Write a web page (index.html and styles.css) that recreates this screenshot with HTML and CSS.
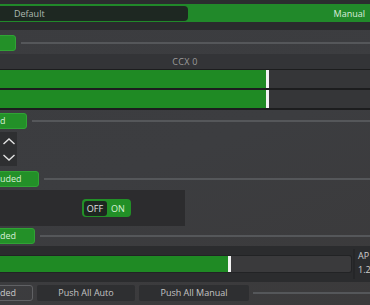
FILE: index.html
```html
<!DOCTYPE html>
<html>
<head>
<meta charset="utf-8">
<link rel="stylesheet" href="styles.css">
</head>
<body>
<div class="page">
  <div class="strip-top"></div>
  <div class="seg">
    <div class="seg-off">Default</div>
    <div class="seg-on">Manual</div>
  </div>
  <div class="strip-gap"></div>

  <div class="row row-a">
    <div class="gbtn w-empty"></div>
    <div class="rule"></div>
  </div>

  <div class="hdr">CCX 0</div>
  <div class="bars">
    <div class="bar"><div class="fill" style="width:266px"></div><div class="handle"></div></div>
    <div class="bar"><div class="fill" style="width:266px"></div><div class="handle"></div></div>
  </div>

  <div class="row row-b">
    <div class="gbtn w-d">d</div>
    <div class="rule"></div>
  </div>

  <div class="arrows">
    <svg width="17" height="34" viewBox="0 0 17 34">
      <polyline points="3.5,12 9,7 14.5,12" fill="none" stroke="#e2e2e2" stroke-width="1.4"/>
      <polyline points="3.5,23 9,28 14.5,23" fill="none" stroke="#e2e2e2" stroke-width="1.4"/>
    </svg>
  </div>

  <div class="row row-c">
    <div class="gbtn w-uded">uded</div>
    <div class="rule"></div>
  </div>

  <div class="panel">
    <div class="toggle">
      <span class="t-off">OFF</span>
      <span class="t-on">ON</span>
    </div>
  </div>

  <div class="row row-d">
    <div class="gbtn w-ded">ded</div>
    <div class="rule"></div>
  </div>

  <div class="barpanel">
    <div class="track"><div class="fill" style="width:228px"></div><div class="handle"></div></div>
    <div class="side">
      <span>AP</span>
      <span>1.2</span>
    </div>
  </div>

  <div class="row row-e">
    <div class="obtn">ded</div>
    <div class="dbtn auto">Push All Auto</div>
    <div class="dbtn manual">Push All Manual</div>
    <div class="rule"></div>
  </div>
</div>
</body>
</html>
```

FILE: styles.css
```css
* { box-sizing: border-box; }

html, body {
  margin: 0;
  padding: 0;
  background: #3a3b3e;
}

.page {
  width: 370px;
  height: 305px;
  overflow: hidden;
  display: flex;
  flex-direction: column;
  font-family: "Open Sans", "Noto Sans", sans-serif;
  font-size: 9px;
  color: #c8c8c8;
  background: linear-gradient(160deg, #3b3c3f 0%, #3c3d40 50%, #3b3a3b 100%);
}

.strip-top {
  height: 4px;
  flex: none;
  background: #2b2d2f;
}

.seg {
  height: 18px;
  flex: none;
  display: flex;
  padding: 1.5px 0;
  background: #21892a;
}

.seg-off {
  width: 188px;
  flex: none;
  padding-left: 14px;
  line-height: 15px;
  background: #1e2822;
  border-radius: 0 4px 4px 0;
  color: #aebbb2;
}

.seg-on {
  flex: 1;
  text-align: right;
  padding-right: 5px;
  line-height: 15px;
  color: #dcecdc;
}

.strip-gap {
  height: 8px;
  flex: none;
  background: #2a2b2d;
}

.row {
  display: flex;
  align-items: center;
  gap: 5px;
  flex: none;
}

.row-a { height: 24px; padding-top: 1px; }
.row-b { height: 22px; }
.row-c { height: 24px; padding-top: 1px; }
.row-d { height: 20px; }
.row-e { height: 23px; gap: 4px; padding-bottom: 2px; }

.gbtn {
  height: 16px;
  flex: none;
  margin-left: -4px;
  padding-left: 3px;
  line-height: 14px;
  background: #239028;
  border: 1px solid #30a335;
  border-radius: 3px;
  color: #d6eed6;
}

.w-empty { width: 20px; }
.w-d { width: 31px; }
.w-uded { width: 43px; }
.w-ded { width: 39px; }

.rule {
  flex: 1;
  height: 2px;
  background: #55575a;
}

.hdr {
  height: 15px;
  flex: none;
  text-align: center;
  line-height: 16px;
  background: #333437;
  color: #9c9c9c;
  letter-spacing: 0.3px;
}

.bars {
  flex: none;
  display: flex;
  flex-direction: column;
  gap: 2px;
  padding: 1px 0 2px;
  background: #1c1d1e;
}

.bar {
  height: 18px;
  display: flex;
  background: #353638;
}

.fill {
  background: #1f8a24;
}

.handle {
  width: 3px;
  background: #f2f2f2;
}

.arrows {
  width: 17px;
  height: 34px;
  flex: none;
  background: #2e2f31;
}

.arrows svg { display: block; }

.panel {
  width: 185px;
  height: 36px;
  flex: none;
  display: flex;
  align-items: center;
  padding-left: 82px;
  background: #2c2c2e;
}

.toggle {
  display: flex;
  align-items: stretch;
  height: 18px;
  width: 49px;
  padding: 1.5px;
  background: #229027;
  border-radius: 4px;
}

.t-off {
  width: 23px;
  text-align: center;
  line-height: 15px;
  background: #1d2720;
  border-radius: 3px;
  color: #e0e0e0;
}

.t-on {
  flex: 1;
  text-align: center;
  line-height: 15px;
  color: #d9f0d9;
}

.barpanel {
  height: 36px;
  flex: none;
  display: flex;
  align-items: flex-start;
  padding-top: 9px;
  background: #2b2c2e;
}

.track {
  width: 352px;
  height: 18px;
  flex: none;
  display: flex;
  background: #3a3a3c;
  border: 1px solid #222325;
  border-left: none;
  border-radius: 0 3px 3px 0;
}

.side {
  flex: 1;
  display: flex;
  flex-direction: column;
  margin-left: 1px;
  margin-top: -6px;
  padding-left: 3px;
  border-left: 2px solid #252628;
  height: 30px;
  line-height: 14px;
  color: #cfcfcf;
  white-space: nowrap;
}

.obtn {
  width: 37px;
  height: 16px;
  flex: none;
  margin-left: -4px;
  padding-left: 3px;
  line-height: 14px;
  border: 1px solid #606164;
  border-radius: 3px;
  color: #c8c8c8;
}

.dbtn {
  height: 16px;
  flex: none;
  text-align: center;
  line-height: 16px;
  background: #2e2f31;
  border-radius: 2px;
  color: #c4c4c4;
}

.auto { width: 98px; }
.manual { width: 110px; }
```
